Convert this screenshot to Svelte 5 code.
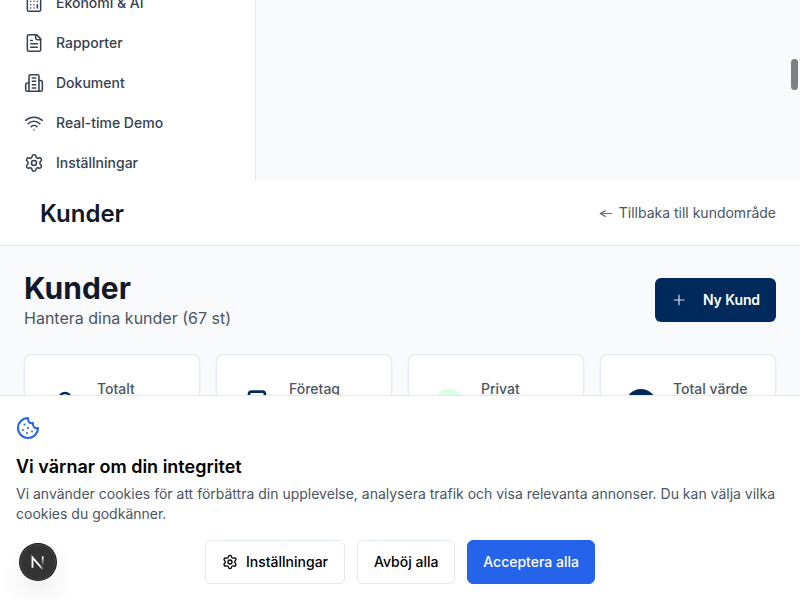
<script>
  const settings = ['M9.671 4.136a2.34 2.34 0 0 1 4.659 0 2.34 2.34 0 0 0 3.319 1.915 2.34 2.34 0 0 1 2.33 4.033 2.34 2.34 0 0 0 0 3.831 2.34 2.34 0 0 1-2.33 4.033 2.34 2.34 0 0 0-3.319 1.915 2.34 2.34 0 0 1-4.659 0 2.34 2.34 0 0 0-3.32-1.915 2.34 2.34 0 0 1-2.33-4.033 2.34 2.34 0 0 0 0-3.831A2.34 2.34 0 0 1 6.35 6.051a2.34 2.34 0 0 0 3.319-1.915', 'M15 12a3 3 0 1 1-6 0a3 3 0 1 1 6 0'];
  const building = ['M6 22V4a2 2 0 0 1 2-2h8a2 2 0 0 1 2 2v18Z', 'M6 12H4a2 2 0 0 0-2 2v6a2 2 0 0 0 2 2h2', 'M18 9h2a2 2 0 0 1 2 2v9a2 2 0 0 1-2 2h-2', 'M10 6h4', 'M10 10h4', 'M10 14h4', 'M10 18h4'];
  const nav = [
    { label: 'Ekonomi & AI', icon: ['M6 2h12a2 2 0 0 1 2 2v16a2 2 0 0 1-2 2H6a2 2 0 0 1-2-2V4a2 2 0 0 1 2-2Z', 'M8 6h8', 'M16 14v4', 'M16 10h.01', 'M12 10h.01', 'M8 10h.01', 'M12 14h.01', 'M8 14h.01', 'M12 18h.01', 'M8 18h.01'] },
    { label: 'Rapporter', icon: ['M15 2H6a2 2 0 0 0-2 2v16a2 2 0 0 0 2 2h12a2 2 0 0 0 2-2V7Z', 'M14 2v4a2 2 0 0 0 2 2h4', 'M10 9H8', 'M16 13H8', 'M16 17H8'] },
    { label: 'Dokument', icon: building },
    { label: 'Real-time Demo', icon: ['M12 20h.01', 'M2 8.82a15 15 0 0 1 20 0', 'M5 12.859a10 10 0 0 1 14 0', 'M8.5 16.429a5 5 0 0 1 7 0'] },
    { label: 'Inställningar', icon: settings }
  ];
  const cookie = ['M12 2a10 10 0 1 0 10 10 4 4 0 0 1-5-5 4 4 0 0 1-5-5', 'M8.5 8.5v.01', 'M16 15.5v.01', 'M12 12v.01', 'M11 17v.01', 'M7 14v.01'];
  const user = ['M19 21v-2a4 4 0 0 0-4-4H9a4 4 0 0 0-4 4v2', 'M16 7a4 4 0 1 1-8 0a4 4 0 1 1 8 0'];
  const stats = [
    { label: 'Totalt', icon: user },
    { label: 'Företag', icon: building },
    { label: 'Privat', dot: 'green' },
    { label: 'Total värde', dot: 'navy' }
  ];
</script>

{#snippet icon(paths, size)}
  <svg width={size} height={size} viewBox="0 0 24 24" fill="none" stroke="currentColor" stroke-width="2" stroke-linecap="round" stroke-linejoin="round">
    {#each paths as d}<path {d} />{/each}
  </svg>
{/snippet}

<div class="page">
  <div class="top">
    <aside>
      {#each nav as item}
        <a>{@render icon(item.icon, 20)}<span>{item.label}</span></a>
      {/each}
    </aside>
  </div>
  <header>
    <h2>Kunder</h2>
    <a><span class="arrow">←</span> Tillbaka till kundområde</a>
  </header>
  <main>
    <div class="heading">
      <div>
        <h1>Kunder</h1>
        <p>Hantera dina kunder (67 st)</p>
      </div>
      <button class="new">
        <svg width="16" height="16" viewBox="0 0 16 16" stroke="#fff" stroke-width="1.2" stroke-opacity=".85"><path d="M2.7 8h10.6M8 2.7v10.6" /></svg>
        Ny Kund
      </button>
    </div>
    <div class="stats">
      {#each stats as s}
        <div class="card">
          {#if s.icon}{@render icon(s.icon, 32)}{:else}<i class={s.dot}></i>{/if}
          <span>{s.label}</span>
        </div>
      {/each}
    </div>
  </main>

  <section class="consent">
    <div class="cookie">{@render icon(cookie, 24)}</div>
    <h3>Vi värnar om din integritet</h3>
    <p>Vi använder cookies för att förbättra din upplevelse, analysera trafik och visa relevanta annonser. Du kan välja vilka cookies du godkänner.</p>
    <div class="actions">
      <button class="settings">{@render icon(settings, 16)}Inställningar</button>
      <button class="reject">Avböj alla</button>
      <button class="accept">Acceptera alla</button>
    </div>
  </section>

  <div class="badge">
    <svg width="36" height="36" viewBox="0 0 36 36" fill="none">
      <defs>
        <linearGradient id="diag" x1="17" y1="17" x2="23.5" y2="25" gradientUnits="userSpaceOnUse"><stop offset=".5" stop-color="#fff" /><stop offset="1" stop-color="#fff" stop-opacity=".2" /></linearGradient>
        <linearGradient id="bar" x1="0" y1="13" x2="0" y2="22" gradientUnits="userSpaceOnUse"><stop stop-color="#fff" /><stop offset="1" stop-color="#fff" stop-opacity="0" /></linearGradient>
      </defs>
      <path d="M12.5 23.7V13.5L22.6 25.2" stroke="url(#diag)" stroke-width="1.9" />
      <path d="M22.7 12.3V21.5" stroke="url(#bar)" stroke-width="1.7" />
    </svg>
  </div>
  <div class="thumb"></div>
</div>

<style>
  :global(body) { margin: 0; overflow: hidden; }
  * { box-sizing: border-box; }
  h1, h2, h3, p { margin: 0; }
  svg { flex: none; display: block; }
  button { font: inherit; border: 0; }
  .page { position: relative; width: 800px; height: 600px; overflow: hidden; background: #f9fafb; font-family: Inter, sans-serif; font-size: 14px; line-height: 20px; color: #111827; }
  .top { display: flex; height: 181px; background: #f8fafc; }
  aside { width: 256px; height: 181px; background: #fff; border-right: 1px solid #e2e8f0; padding: 0 12px; display: flex; flex-direction: column; justify-content: flex-end; gap: 4px; overflow: hidden; }
  aside a { display: flex; align-items: center; flex: none; gap: 12px; height: 36px; padding: 0 12px; font-weight: 500; color: #374151; }
  aside :global(svg) { stroke-width: 1.85; }
  header { height: 65px; background: #fff; border-bottom: 1px solid #e2e8f0; display: flex; justify-content: space-between; align-items: center; padding: 0 24px 0 40px; }
  h2 { font-size: 24px; line-height: 32px; font-weight: 600; padding-top: 2px; }
  header a { color: #4b5563; }
  .arrow { display: inline-block; transform: translateY(0.5px) scale(1.25, 0.75); transform-origin: right center; }
  main { padding: 24px; }
  .heading { display: flex; justify-content: space-between; align-items: center; height: 60px; }
  h1 { font-size: 30px; line-height: 36px; font-weight: 700; }
  .heading p { font-size: 16px; line-height: 24px; color: #4b5563; }
  .new { width: 121px; height: 44px; border-radius: 6px; padding: 0 16px; background: #002a5c; color: #fff; font-weight: 600; letter-spacing: -0.1px; display: flex; align-items: center; justify-content: space-between; }
  .stats { display: grid; grid-template-columns: repeat(4, 1fr); gap: 16px; margin-top: 24px; }
  .card { height: 100px; background: #fff; border: 1px solid #e2e8f0; border-radius: 8px; padding: 24px; display: flex; gap: 16px; color: #002a5c; box-shadow: 0 1px 2px #0000000d; }
  .card :global(svg) { margin-top: 10px; }
  .card i { width: 32px; height: 32px; flex: none; border-radius: 50%; margin-top: 10px; }
  .green { background: #dcfce7; }
  .navy { background: #002a5c; }
  .card span { font-weight: 500; color: #4b5563; white-space: nowrap; }
  .consent { position: absolute; left: 0; right: 0; bottom: 0; height: 205px; background: #fff; border-top: 1px solid #e2e8f0; padding: 20px 16px 16px; }
  .cookie { color: #2563eb; }
  h3 { font-size: 18px; line-height: 28px; font-weight: 600; color: #000; margin-top: 13px; }
  .consent p { color: #4b5563; margin-top: 3px; }
  .actions { display: flex; justify-content: center; gap: 12px; margin-top: 16px; }
  .actions button { height: 44px; padding: 0; display: flex; align-items: center; justify-content: center; border: 1px solid #e2e8f0; border-radius: 6px; background: #fff; color: #000; font-weight: 500; white-space: nowrap; }
  .actions .settings { gap: 8px; width: 140px; }
  .actions .reject { width: 98.4px; }
  .actions .accept { background: #2563eb; border-color: #2563eb; color: #fff; width: 127.8px; margin-left: -0.2px; }
  .badge { position: absolute; left: 20px; top: 544px; width: 36px; height: 36px; border-radius: 50%; background: #333; box-shadow: 0 0 0 1px #171717, inset 0 0 0 1px #454545, 0 16px 32px -8px #0000003d; }
  .thumb { position: absolute; right: 2px; top: 59px; width: 7px; height: 31px; border-radius: 4px; background: #7f7f7f; }
</style>
